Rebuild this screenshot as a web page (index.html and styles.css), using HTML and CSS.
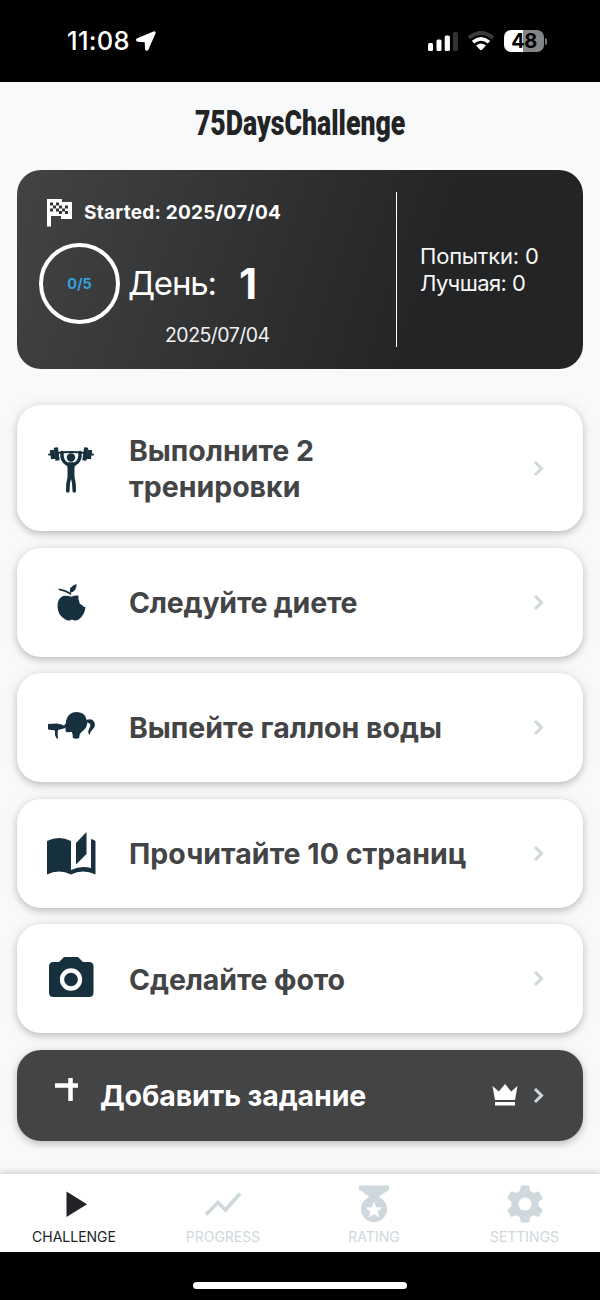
FILE: index.html
```html
<!DOCTYPE html>
<html lang="ru">
<head>
<meta charset="utf-8">
<title>75DaysChallenge</title>
<link rel="stylesheet" href="styles.css">
</head>
<body>
<div class="app">
  <header class="status">
    <div class="status-left">
      <span class="time">11:08</span>
      <svg class="location" width="20" height="20" viewBox="0 0 20 20"><path d="M17.800 1.200 1.500 8c-1 .500-.8 1.800.3 1.800l7.700.5.400 7.700c0 1.200 1.300 1.300 1.800.2L18.700 2.100c.3-.7-.2-1.200-.9-.9Z" fill="#fff" stroke="#fff" stroke-width="1.700" stroke-linejoin="round"/></svg>
    </div>
    <div class="status-right">
      <svg width="31" height="20" viewBox="0 0 31 20"><g fill="#fff"><rect y="12" width="5" height="8" rx="1.5"/><rect x="8.5" y="8.5" width="5" height="11.5" rx="1.5"/><rect x="16.7" y="4.5" width="5.2" height="15.5" rx="1.5"/></g><rect x="25" y="1" width="5" height="19" rx="1.5" fill="#333"/></svg>
      <svg width="28" height="20" viewBox="0 0 28 20" fill="none"><path d="M2 6.800Q14-3 26 6.800" stroke="#3a3a3a" stroke-width="4"/><path d="M6 11.200q8-6.500 16 0" stroke="#fff" stroke-width="3.600"/><path d="M9 14.500q5-4 10 0l-4 4.300q-1 .900-2 0Z" fill="#fff"/></svg>
      <div class="battery"><span class="battery-level">48</span><i class="battery-tip"></i></div>
    </div>
  </header>

  <main class="screen">
    <h1 class="title"><span class="title-text">75DaysChallenge</span></h1>
    <section class="hero">
      <div class="hero-main">
        <div class="started">
          <svg width="26" height="29" viewBox="0 0 26 29"><path fill="#fff" d="M0 1h15v3h10v17H14v-3H4v10.500H0Z"/><path fill="#343536" d="M3 4.500h3v3H3zm6 0h3v3H9zM6 7.500h3v3H6zm6 0h3v3h-3zM3 10.500h3v3H3zm6 0h3v3H9zm6 0h3v3h-3zM18 7.500h3v3h-3zM12 13h3v3h-3zm6 0h3v3h-3z"/></svg>
          <span class="started-text">Started: 2025/07/04</span>
        </div>
        <div class="day">
          <div class="ring"><span>0/5</span></div>
          <span class="day-label">День:</span>
          <span class="day-number">1</span>
        </div>
        <div class="date">2025/07/04</div>
      </div>
      <div class="stats">
        <div class="attempts">Попытки: 0</div>
        <div class="best">Лучшая: 0</div>
      </div>
    </section>

    <section class="tasks">
      <article class="task task-tall">
        <div class="task-icon"><svg width="50" height="50" viewBox="0 0 50 50"><g stroke="#17303e" fill="none" stroke-linecap="round"><path d="M3 10.500h4M11 9q14-2 28 0M43 10.500h4" stroke-width="2"/><path d="m5.800 6 1.400 9M9.800 3.500l1.800 13" stroke-width="4.200" stroke-linecap="butt"/><path d="m44.200 6-1.400 9M40.200 3.500l-1.800 13" stroke-width="4.200" stroke-linecap="butt"/><path d="M16 8.500q-.800 8.500 5 11.500h8q5.800-3 5-11.500" stroke-width="3.500" stroke-linejoin="round"/></g><circle cx="25" cy="13.500" r="4.200" fill="#17303e"/><path fill="#17303e" d="M21 19h8q-.8 6-.5 14 1.700 6 1.500 14 0 1.800-1.800 1.800-1.700 0-1.700-1.800L26 39l-1-4-1 4-.5 8q0 1.800-1.700 1.800-1.800 0-1.800-1.800-.2-8 1.500-14 .3-8-.5-14Z"/></svg></div>
        <h2 class="task-name name-workout">Выполните 2<br>тренировки</h2>
        <svg class="chevron" width="12" height="17" viewBox="0 0 12 17"><path d="m2 2 6.500 6.500L2 15"/></svg>
      </article>
      <article class="task">
        <div class="task-icon"><svg width="50" height="50" viewBox="0 0 50 50" fill="#17303e"><path d="M17 18q4.500-1 8.500.8 2.500-1.800 7-1.300-.6 3.500.7 5.500 0 3.500 3 4 .5 2.200 3.300 2-.7 7.700-6.500 12.200-3.500 2.200-7 .3-3.500 1.900-7-.3-7.500-4.500-7.500-13 .2-8 5.500-10.200Z"/><path d="M30.500 6q.5 7-6.500 9-1.500-6.500 6.500-9ZM13 10.500q7 1 12.500 5.300l-.7 1.300q-5-3.500-12.300-5Z"/></svg></div>
        <h2 class="task-name name-diet">Следуйте диете</h2>
        <svg class="chevron" width="12" height="17" viewBox="0 0 12 17"><path d="m2 2 6.500 6.500L2 15"/></svg>
      </article>
      <article class="task">
        <div class="task-icon"><svg width="50" height="50" viewBox="0 0 50 50" fill="#17303e"><path d="M20 18q2-9 11-9 8.500.5 9.500 7.500l1 2.500q-.3 6-6 10-2.500 2-2.200 6-3 1.500-6.500 0 .2-3.500-1-6l-5 .2q-1.800-.5-1.300-3.500l-.2-1.700-1.300-1.500 2-2.500Z"/><path d="M40.500 17q5.500-2.500 8 2.500 1.500 4-2.500 7.500-2 2-2.500 5-2.500-3 0-7 2.500-4.500-2-5.500Z"/><path d="m2 21 9-.5 4.500 1 4 2v1.500l-7.500 2q-.8 4 0 8.500h-1.500q-2.300-3.500-1.500-8L2 26.500Z"/></svg></div>
        <h2 class="task-name name-water">Выпейте галлон воды</h2>
        <svg class="chevron" width="12" height="17" viewBox="0 0 12 17"><path d="m2 2 6.500 6.500L2 15"/></svg>
      </article>
      <article class="task">
        <div class="task-icon"><svg width="50" height="50" viewBox="0 0 50 50" fill="#17303e"><path d="M1 12q12-6 24 0v33.500q-12-6-24 0Z"/><path d="M30 14 40.500 3v22L30 35.500Z"/><path d="M45 10q2.500.6 4.500 2v33.500Q37 39.500 25 45.500V41q10-5 20-2Z"/></svg></div>
        <h2 class="task-name name-pages">Прочитайте 10 страниц</h2>
        <svg class="chevron" width="12" height="17" viewBox="0 0 12 17"><path d="m2 2 6.500 6.500L2 15"/></svg>
      </article>
      <article class="task">
        <div class="task-icon"><svg width="50" height="50" viewBox="0 0 50 50"><path fill="#17303e" d="M18 3h14l5 5h6q4.500 0 4.500 4.500v26q0 4.500-4.500 4.500H7.500Q3 43 3 38.500v-26Q3 8 7.500 8H13Z"/><circle cx="25" cy="25.500" r="9" fill="none" stroke="#fff" stroke-width="4.300"/></svg></div>
        <h2 class="task-name name-photo">Сделайте фото</h2>
        <svg class="chevron" width="12" height="17" viewBox="0 0 12 17"><path d="m2 2 6.500 6.500L2 15"/></svg>
      </article>
      <article class="task add">
        <svg class="plus" width="24" height="24" viewBox="0 0 24 24"><path d="M0 7.500h23M15.500 0v23" fill="none" stroke="#fff" stroke-width="4.500"/></svg>
        <h2 class="task-name name-add">Добавить задание</h2>
        <svg class="crown" width="26" height="24" viewBox="0 0 26 24" fill="#fff"><path d="m.5 3 6.300 5.500L13 1l6.200 7.500L25.500 3 23 17H3Z"/><path d="M3 19h20v3.500H3z"/></svg>
        <svg class="chevron" width="12" height="17" viewBox="0 0 12 17"><path d="m2 2 6.500 6.500L2 15"/></svg>
      </article>
    </section>
  </main>

  <nav class="tabs">
    <div class="tab tab-active"><svg width="40" height="40" viewBox="0 0 40 40"><path fill="currentColor" d="M12.500 7.500 33 20.300 12.500 33Z"/></svg><span class="lab-challenge">CHALLENGE</span></div>
    <div class="tab"><svg width="40" height="40" viewBox="0 0 40 40"><path d="m3 30.500 12-12 7.500 7.500L37 9.500" fill="none" stroke="currentColor" stroke-width="3.700"/></svg><span class="lab-progress">PROGRESS</span></div>
    <div class="tab"><svg width="40" height="40" viewBox="0 0 40 40"><path fill="currentColor" fill-rule="evenodd" d="M5 1.500h30v4L24.500 13A13 13 0 1 1 15.500 13L5 5.500ZM20 17l-2.200 6.200-6.500.2 5.100 4-1.800 6.300 5.400-3.700 5.400 3.700-1.800-6.300 5.100-4-6.500-.2Z"/></svg><span class="lab-rating">RATING</span></div>
    <div class="tab"><svg width="40" height="40" viewBox="0 0 40 40"><path fill="currentColor" fill-rule="evenodd" d="M16 1.500h8l1.200 5.600 3.300 1.900 5.300-1.700 4 6.900-4.200 3.900v4.100l4.200 3.900-4 6.900-5.300-1.700-3.300 1.900L24 38.500h-8l-1.200-5.300-3.300-1.900L6.200 33l-4-6.900 4.200-3.900v-4.100l-4.200-3.900 4-6.900L11.500 9l3.300-1.900ZM20 13.600a6.500 6.500 0 1 0 0 13 6.500 6.500 0 0 0 0-13Z"/></svg><span class="lab-settings">SETTINGS</span></div>
  </nav>
  <footer class="home"><div class="home-bar"></div></footer>
</div>
</body>
</html>
```
FILE: styles.css
```css
* { box-sizing: border-box; }
body { margin: 0; font-family: Inter, "Noto Sans", sans-serif; background: #000; }
h1, h2 { margin: 0; }
svg { display: block; flex: none; }
span, h2 { white-space: nowrap; }
.app { width: 600px; height: 1300px; display: flex; flex-direction: column; overflow: hidden; }

.status { height: 82px; flex: none; background: #000; color: #fff; display: flex; justify-content: space-between; padding: 0 56px 1px 67px; }
.status-left, .status-right { display: flex; align-items: center; }
.status-left { gap: 6px; }
.time { font-size: 25.500px; font-weight: 500; letter-spacing: 0.300px; }
.status-right { gap: 10px; }
.status-right svg:first-child { margin-right: 1px; margin-left: -2px; }
.status-right svg:nth-child(2) { margin-left: -3px; margin-right: 2px; }
.battery { position: relative; width: 40px; height: 22px; margin-left: -3px; border-radius: 7px; background: linear-gradient(90deg, #fff 48%, #858585 48%); color: #000; display: flex; align-items: center; justify-content: center; }
.battery-level { font-size: 20px; font-weight: 700; line-height: 22px; letter-spacing: -0.500px; }
.battery-tip { position: absolute; left: 41px; top: 8px; width: 2px; height: 7px; border-radius: 0 3px 3px 0; background: #777; }

.screen { flex: 1; background: #f8f9fb; padding: 0 17px; }
.title { height: 88px; display: flex; align-items: center; justify-content: center; padding-bottom: 7px; color: #222325; }
.title-text { font-family: Roboto, sans-serif; font-size: 34.500px; font-weight: 900; line-height: 40px; transform: scaleX(.773); }

.hero { height: 199px; border-radius: 24px; background: linear-gradient(108deg, #424344 0%, #232426 72%); color: #fff; display: flex; padding: 22px; }
.hero-main { width: 358px; border-right: 1.500px solid #fff; display: flex; flex-direction: column; }
.started { display: flex; align-items: center; gap: 11px; height: 41px; padding-left: 8px; }
.started-text { font-size: 19px; font-weight: 700; letter-spacing: 0.250px; }
.day { display: flex; align-items: center; height: 100px; margin-top: -1px; padding-top: 2px; }
.ring { width: 81px; height: 81px; border: 4px solid #fff; border-radius: 50%; display: flex; align-items: center; justify-content: center; color: #35a0dc; font-size: 14.500px; font-weight: 700; }
.day-label { font-size: 33px; margin-left: 8px; width: 111px; letter-spacing: -1.200px; }
.day-number { font-size: 42px; font-weight: 700; }
.date { font-size: 19.500px; line-height: 24px; margin: -9px 0 0 126px; color: #f1f1f1; letter-spacing: -0.530px; }
.stats { padding: 51px 0 0 23px; font-size: 22px; line-height: 27px; color: #f7f7f7; }
.attempts { letter-spacing: -0.200px; }
.best { letter-spacing: -0.600px; }

.tasks { display: flex; flex-direction: column; gap: 16.600px; padding-top: 36px; }
.task { height: 109px; border-radius: 24px; background: #fff; box-shadow: 0 3px 7px rgba(0,0,0,.2), 0 0 15px rgba(0,0,0,.07); display: flex; align-items: center; padding: 0 38px 0 29px; }
.task-tall { height: 126px; }
.task-icon { width: 83px; padding-top: 1px; }
.task-name { flex: 1; font-size: 28.500px; line-height: 35.500px; padding-top: 1px; font-weight: 700; letter-spacing: 0; color: #434446; }
.name-diet { letter-spacing: -0.220px; }
.name-pages { letter-spacing: 0.040px; }
.name-photo { letter-spacing: -0.120px; }
.chevron path { fill: none; stroke: #cfd8dc; stroke-width: 3; }
.add { height: 91px; background: #434446; padding-left: 38px; }
.add .task-name { color: #fff; margin-left: 21px; letter-spacing: -0.120px; }
.plus { margin-top: -10px; }
.crown { margin-right: 15px; }

.tabs { position: relative; height: 78px; flex: none; background: #fff; display: grid; grid-template-columns: repeat(4, 150px); box-shadow: 0 -2px 6px rgba(0,0,0,.16); }
.tab { display: flex; flex-direction: column; align-items: center; padding-top: 10px; color: #cfd8dc; font-size: 14px; line-height: 18px; }
.tab span { margin-top: 4px; }
.tab:first-child { padding-right: 2px; }
.tab:nth-child(2) { padding-right: 4px; }
.tab:nth-child(3) { padding-right: 2px; }
.tab:nth-child(4) { padding-right: 1px; }
.tab-active { color: #222327; }
.home { position: relative; height: 48px; flex: none; background: #000; display: flex; justify-content: center; align-items: flex-start; padding-top: 30px; }
.home-bar { width: 214px; height: 7px; border-radius: 4px; background: #fff; }
```
